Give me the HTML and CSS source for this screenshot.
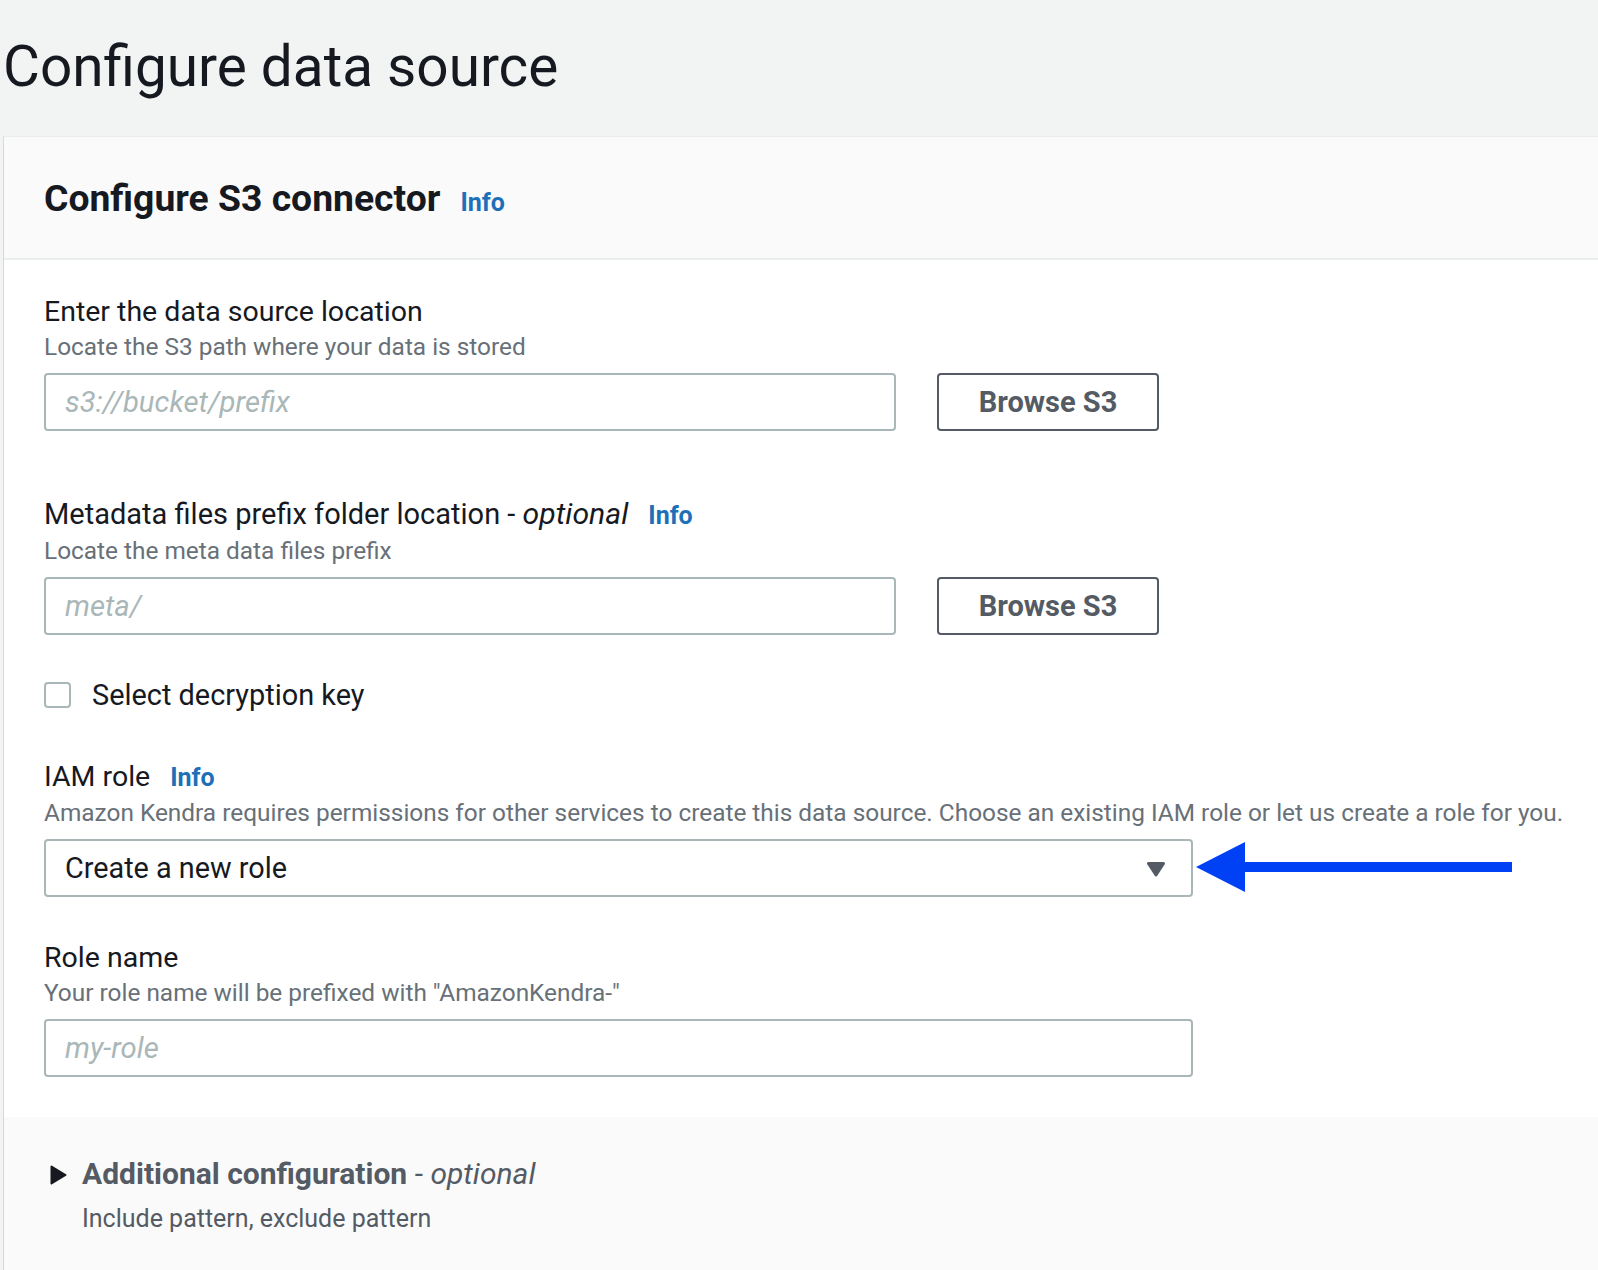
FILE: index.html
```html
<!DOCTYPE html>
<html lang="en">
<head>
<meta charset="utf-8">
<title>Configure data source</title>
<link rel="stylesheet" href="styles.css">
</head>
<body>
<header class="page-header">
  <h1 class="page-title">Configure data source</h1>
</header>
<section class="panel">
  <div class="panel-head">
    <h2 class="panel-title">Configure S3 connector</h2>
    <a class="info" href="#">Info</a>
  </div>
  <div class="panel-body">
    <div class="field field-s3">
      <div class="label">Enter the data source location</div>
      <div class="desc">Locate the S3 path where your data is stored</div>
      <div class="control-row">
        <input class="input input-short" type="text" placeholder="s3://bucket/prefix">
        <button class="btn" type="button">Browse S3</button>
      </div>
    </div>
    <div class="field field-meta">
      <div class="label">Metadata files prefix folder location -&nbsp;<em>optional</em><a class="info" href="#">Info</a></div>
      <div class="desc">Locate the meta data files prefix</div>
      <div class="control-row">
        <input class="input input-short" type="text" placeholder="meta/">
        <button class="btn" type="button">Browse S3</button>
      </div>
    </div>
    <label class="check-row">
      <span class="checkbox"></span>
      <span class="check-label">Select decryption key</span>
    </label>
    <div class="field field-iam">
      <div class="label">IAM role<a class="info" href="#">Info</a></div>
      <div class="desc">Amazon Kendra requires permissions for other services to create this data source. Choose an existing IAM role or let us create a role for you.</div>
      <div class="control-row">
        <div class="select">
          <span class="select-value">Create a new role</span>
          <svg class="caret" width="20" height="16" viewBox="0 0 20 16"><path d="M2.5 2.5 H17.5 L10 14 Z" fill="#545b64" stroke="#545b64" stroke-width="3" stroke-linejoin="round"/></svg>
        </div>
        <svg class="arrow" width="316" height="50" viewBox="0 0 316 50"><path d="M0 25 L49 0 L49 20 L316 20 L316 30 L49 30 L49 50 Z" fill="#0041f5"/></svg>
      </div>
    </div>
    <div class="field field-role">
      <div class="label">Role name</div>
      <div class="desc">Your role name will be prefixed with "AmazonKendra-"</div>
      <div class="control-row">
        <input class="input input-long" type="text" placeholder="my-role">
      </div>
    </div>
  </div>
  <div class="panel-foot">
    <div class="exp-head">
      <svg class="exp-caret" width="17" height="20" viewBox="0 0 17 20"><path d="M1.5 1.5 L15.5 10 L1.5 18.5 Z" fill="#16191f" stroke="#16191f" stroke-width="2" stroke-linejoin="round"/></svg>
      <span class="exp-title"><strong>Additional configuration</strong> - <em>optional</em></span>
    </div>
    <div class="exp-sub">Include pattern, exclude pattern</div>
  </div>
</section>
</body>
</html>
```

FILE: styles.css
```css
* { box-sizing: border-box; }

html, body { height: 100%; }

body {
  margin: 0;
  background: #f2f3f3;
  font-family: Roboto, "Noto Sans", "Liberation Sans", sans-serif;
  color: #16191f;
  display: flex;
  flex-direction: column;
  overflow: hidden;
}

.page-header {
  flex: none;
  height: 136px;
  padding: 35px 0 0 3px;
}

.page-title {
  margin: 0;
  font-size: 56.7px;
  line-height: 64px;
  font-weight: 400;
}

.panel {
  flex: 1;
  display: flex;
  flex-direction: column;
  margin-left: 3px;
  background: #fff;
  border-left: 1px solid #d5dbdb;
  border-top: 1px solid #eaeded;
}

.panel-head {
  background: #fafafa;
  border-bottom: 2px solid #eaeded;
  padding: 39px 40px 38px;
  display: flex;
  align-items: baseline;
}

.panel-title {
  margin: 0;
  font-size: 37.3px;
  line-height: 44px;
  font-weight: 700;
}

.info {
  color: #1d70b8;
  font-weight: 700;
  font-size: 25px;
  font-style: normal;
  margin-left: 20px;
  text-decoration: none;
}

.panel-body {
  padding: 35px 40px 40px;
}

.label {
  font-size: 28.5px;
  line-height: 34px;
  display: flex;
  align-items: baseline;
  white-space: nowrap;
}

.label em { font-style: italic; font-size: 29.5px; }

.field-meta .label { font-size: 29px; }
.field-meta .label em { font-size: 30.2px; }

.desc {
  margin-top: 7px;
  font-size: 24.4px;
  line-height: 22px;
  color: #687078;
  white-space: nowrap;
}

.control-row {
  display: flex;
  align-items: center;
  margin-top: 15px;
}

.input {
  height: 58px;
  border: 2px solid #aab7b8;
  border-radius: 4px;
  padding: 0 19px;
  font-family: Roboto, "Noto Sans", sans-serif;
  font-size: 29.3px;
  color: #16191f;
  background: #fff;
  outline: none;
}

.input::placeholder {
  color: #aab7b8;
  font-style: italic;
}

.input-short { width: 852px; }
.input-long { width: 1149px; }

.btn {
  width: 222px;
  height: 58px;
  margin-left: 41px;
  border: 2px solid #545b64;
  border-radius: 4px;
  background: #fff;
  color: #545b64;
  font-family: Roboto, "Noto Sans", sans-serif;
  font-size: 29px;
  font-weight: 700;
  padding: 0;
}

.field-s3 { margin-bottom: 66px; }
.field-meta { margin-bottom: 47px; }
.field-iam { margin-bottom: 44px; }

.check-row {
  display: flex;
  align-items: center;
  height: 26px;
  margin-bottom: 52px;
}

.checkbox {
  width: 27px;
  height: 26px;
  border: 2px solid #aab7b8;
  border-radius: 4px;
  background: #fff;
}

.check-label {
  margin-left: 21px;
  font-size: 28.9px;
  line-height: 26px;
}

.select {
  width: 1149px;
  height: 58px;
  border: 2px solid #aab7b8;
  border-radius: 4px;
  display: flex;
  align-items: center;
  justify-content: space-between;
  padding: 0 25px 0 19px;
}

.select-value {
  font-size: 28.8px;
}

.caret { display: block; margin-top: 1px; }

.arrow {
  display: block;
  margin-left: 3px;
  margin-top: -2px;
}

.panel-foot {
  flex: 1;
  background: #fafafa;
  padding: 40px 40px 0;
}

.exp-head {
  display: flex;
  align-items: center;
  padding-left: 6px;
  height: 34px;
}

.exp-caret {
  display: block;
  margin-right: 15px;
  margin-top: 2px;
}

.exp-title {
  font-size: 30px;
  line-height: 34px;
  color: #545b64;
}

.exp-title strong { font-weight: 700; }
.exp-title em { font-style: italic; }

.exp-sub {
  margin-top: 17px;
  padding-left: 38px;
  font-size: 25px;
  line-height: 22px;
  color: #545b64;
}
```
